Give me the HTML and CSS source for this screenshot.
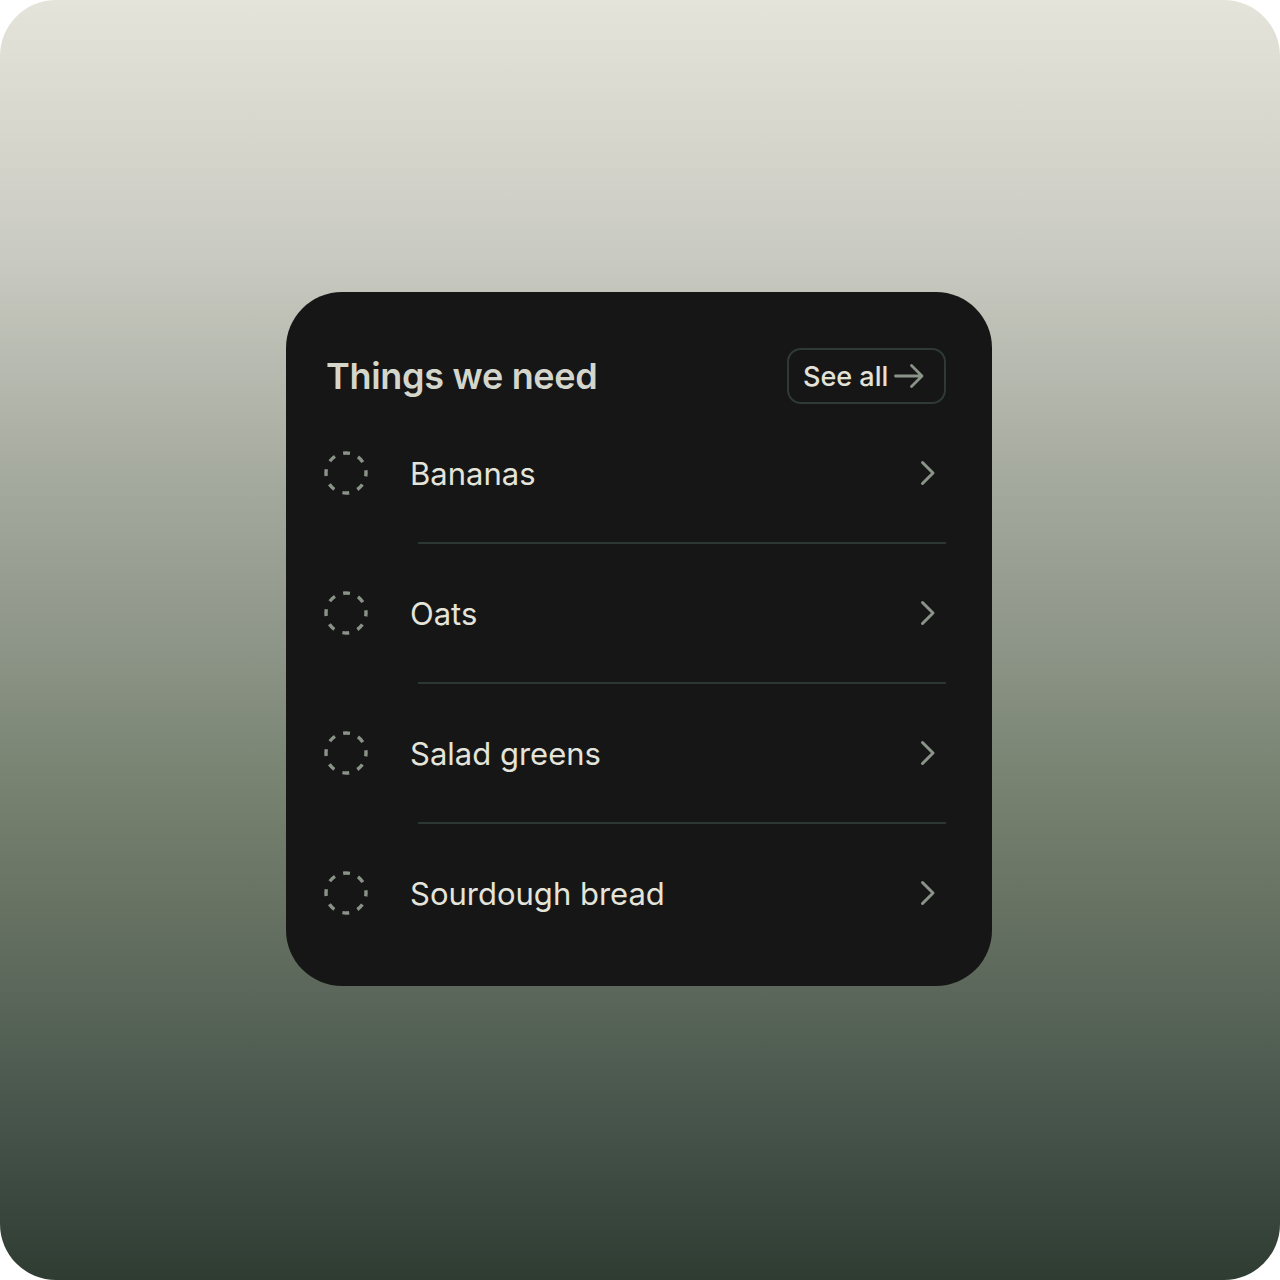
FILE: index.html
```html
<!DOCTYPE html>
<html lang="en">
<head>
    <meta charset="UTF-8">
    <meta name="viewport" content="width=device-width, initial-scale=1.0">
    <title>Things we need</title>
    <link rel="stylesheet" href="styles.css">
</head>
<body>
    <div class="stage">
        <!-- Shopping list card -->
        <section class="card">
            <div class="card-header">
                <h1>Things we need</h1>
                <button class="see-all-btn">
                    See all
                    <svg class="arrow" width="30" height="26" viewBox="0 0 30 26" fill="none">
                        <path d="M1.5 13H27.5M17.5 2.5L28 13L17.5 23.5" stroke="#8a9488" stroke-width="2.8" stroke-linecap="round" stroke-linejoin="round"/>
                    </svg>
                </button>
            </div>

            <ul class="item-list">
                <li class="item">
                    <svg class="check" width="46" height="46" viewBox="0 0 46 46"><circle cx="23" cy="23" r="20"/></svg>
                    <span class="item-name">Bananas</span>
                    <svg class="chevron" width="16" height="26" viewBox="0 0 16 26"><path d="M2.5 2.5L13 13L2.5 23.5"/></svg>
                </li>
                <li class="divider"></li>
                <li class="item">
                    <svg class="check" width="46" height="46" viewBox="0 0 46 46"><circle cx="23" cy="23" r="20"/></svg>
                    <span class="item-name">Oats</span>
                    <svg class="chevron" width="16" height="26" viewBox="0 0 16 26"><path d="M2.5 2.5L13 13L2.5 23.5"/></svg>
                </li>
                <li class="divider"></li>
                <li class="item">
                    <svg class="check" width="46" height="46" viewBox="0 0 46 46"><circle cx="23" cy="23" r="20"/></svg>
                    <span class="item-name">Salad greens</span>
                    <svg class="chevron" width="16" height="26" viewBox="0 0 16 26"><path d="M2.5 2.5L13 13L2.5 23.5"/></svg>
                </li>
                <li class="divider"></li>
                <li class="item">
                    <svg class="check" width="46" height="46" viewBox="0 0 46 46"><circle cx="23" cy="23" r="20"/></svg>
                    <span class="item-name">Sourdough bread</span>
                    <svg class="chevron" width="16" height="26" viewBox="0 0 16 26"><path d="M2.5 2.5L13 13L2.5 23.5"/></svg>
                </li>
            </ul>
        </section>
    </div>
</body>
</html>
```

FILE: styles.css
```css
* {
    margin: 0;
    padding: 0;
    box-sizing: border-box;
}

body {
    margin: 0;
    background-color: #ffffff;
    font-family: Inter, "Noto Sans", sans-serif;
}

/* Backdrop */
.stage {
    width: 1280px;
    height: 1280px;
    border-radius: 56px;
    padding: 0 2px 2px 0;
    background: linear-gradient(180deg, #e5e4db 0%, #c9cac1 20%, #a4a99d 38%, #8e9689 50%, #76816f 62%, #5a6659 78%, #45534a 88%, #2e3c32 100%);
    display: flex;
    justify-content: center;
    align-items: center;
}

/* Card */
.card {
    width: 706px;
    height: 694px;
    background-color: #161616;
    border-radius: 56px;
    padding: 56px 46px 0 37px;
}

.card-header {
    display: flex;
    justify-content: space-between;
    align-items: center;
    height: 56px;
}

.card-header h1 {
    font-size: 36px;
    font-weight: 600;
    color: #d4d5cb;
    letter-spacing: -0.3px;
    padding-left: 3px;
}

.see-all-btn {
    display: flex;
    align-items: center;
    gap: 6px;
    height: 56px;
    width: 159px;
    padding: 0 0 0 14px;
    background: transparent;
    border: 2px solid #2e3a33;
    border-radius: 14px;
    font-family: Inter, "Noto Sans", sans-serif;
    font-size: 27px;
    font-weight: 500;
    color: #e2e2d8;
}

/* List */
.item-list {
    list-style: none;
}

.item {
    display: flex;
    align-items: center;
    height: 138px;
}

.check {
    fill: none;
    stroke: #8a9388;
    stroke-width: 3.4;
    stroke-dasharray: 7 8.7;
    stroke-dashoffset: 3.5;
}

.item-name {
    flex: 1;
    margin-left: 41px;
    font-size: 31px;
    font-weight: 400;
    color: #e4e4da;
}

.chevron {
    fill: none;
    stroke: #8a9488;
    stroke-width: 3;
    stroke-linecap: round;
    stroke-linejoin: round;
    margin-right: 10px;
}

.divider {
    height: 2px;
    margin-left: 95px;
    background-color: #2b3730;
}
```
